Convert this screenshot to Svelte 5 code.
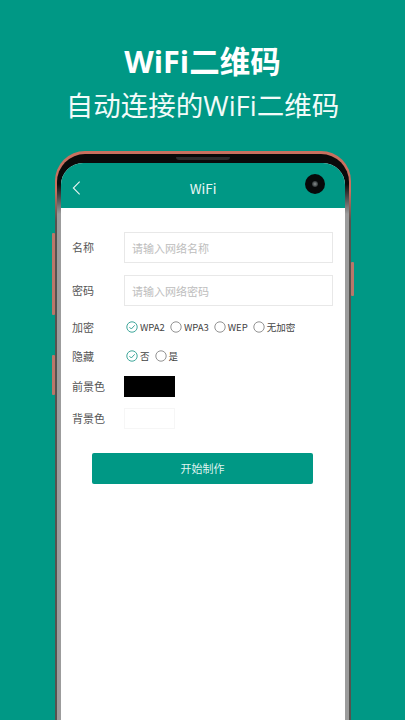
<script>
  const encryption = [
    { label: 'WPA2', on: true },
    { label: 'WPA3', on: false },
    { label: 'WEP', on: false },
    { label: '无加密', on: false }
  ];
  const hidden = [
    { label: '否', on: true },
    { label: '是', on: false }
  ];
</script>

{#snippet radio(item)}
  <span class="opt">
    <svg class="radio" viewBox="0 0 12 12" aria-hidden="true">
      {#if item.on}
        <circle cx="6" cy="6" r="5.2" fill="none" stroke="#2a9d90" stroke-width="0.9" />
        <path d="M3.4 6.1 5.3 8 8.7 4.3" fill="none" stroke="#2a9d90" stroke-width="0.9" />
      {:else}
        <circle cx="6" cy="6" r="5.2" fill="none" stroke="#777" stroke-width="0.8" />
      {/if}
    </svg>
    <span>{item.label}</span>
  </span>
{/snippet}

<div class="page">
  <header class="hero">
    <h1>WiFi二维码</h1>
    <p>自动连接的WiFi二维码</p>
  </header>

  <div class="phone">
    <span class="key left-a"></span>
    <span class="key left-b"></span>
    <span class="key right-a"></span>
    <div class="bezel">
      <span class="earpiece"></span>
      <div class="screen">
        <div class="bar">
          <svg class="back" viewBox="0 0 10 16" aria-hidden="true">
            <path d="M8.5 1 1.5 8l7 7" fill="none" stroke="#eaf6f4" stroke-width="1.2" />
          </svg>
          <span>WiFi</span>
          <span class="camera"><i></i></span>
        </div>
        <form class="form">
          <div class="row field first">
            <span class="label">名称</span>
            <div class="input">请输入网络名称</div>
          </div>
          <div class="row field">
            <span class="label">密码</span>
            <div class="input">请输入网络密码</div>
          </div>
          <div class="row choice enc">
            <span class="label">加密</span>
            <div class="opts">
              {#each encryption as item}{@render radio(item)}{/each}
            </div>
          </div>
          <div class="row choice hide">
            <span class="label">隐藏</span>
            <div class="opts">
              {#each hidden as item}{@render radio(item)}{/each}
            </div>
          </div>
          <div class="row color fg">
            <span class="label">前景色</span>
            <span class="swatch black"></span>
          </div>
          <div class="row color bg">
            <span class="label">背景色</span>
            <span class="swatch white"></span>
          </div>
          <div class="submit">开始制作</div>
        </form>
      </div>
    </div>
  </div>
</div>

<style>
  :global(body) {
    margin: 0;
    background: #009885;
  }
  .page {
    width: 405px;
    height: 720px;
    overflow: hidden;
    background: #009885;
    font-family: "Noto Sans CJK SC", "Noto Sans", sans-serif;
  }
  .hero {
    height: 151px;
    padding-top: 42px;
    box-sizing: border-box;
    text-align: center;
    color: #fff;
  }
  h1 {
    margin: 0;
    font-size: 30.5px;
    line-height: 38px;
    font-weight: 700;
    font-family: "Open Sans", "Noto Sans CJK SC", sans-serif;
  }
  .hero p {
    margin: 8px 0 0;
    font-size: 27.5px;
    line-height: 36px;
    font-weight: 400;
    color: #f2fbf9;
    font-family: "Open Sans", "Noto Sans CJK SC", sans-serif;
  }
  .phone {
    position: relative;
    width: 296px;
    height: 600px;
    margin-left: 55px;
    box-sizing: border-box;
    padding: 3px 2px 0;
    border-radius: 30px 30px 0 0;
    background: linear-gradient(#c9705f 0 40px, #55534f 70px);
  }
  .key {
    position: absolute;
    width: 3px;
    background: #b9776a;
    border-radius: 1px;
  }
  .left-a { left: -3px; top: 82px; height: 82px; }
  .left-b { left: -3px; top: 204px; height: 40px; }
  .right-a { right: -3px; top: 111px; height: 34px; }
  .bezel {
    position: relative;
    height: 100%;
    box-sizing: border-box;
    padding: 9px 4px 0;
    border-radius: 28px 28px 0 0;
    background: linear-gradient(#0a0a0a 0 30px, #9c9c9c 60px);
  }
  .earpiece {
    position: absolute;
    left: 119px;
    top: 3px;
    width: 54px;
    height: 3px;
    border-radius: 0 0 3px 3px;
    background: #2b2b2b;
  }
  .screen {
    height: 100%;
    border-radius: 22px 22px 0 0;
    overflow: hidden;
    background: #fff;
  }
  .bar {
    position: relative;
    height: 45px;
    display: flex;
    align-items: center;
    justify-content: center;
    padding-top: 4px;
    box-sizing: border-box;
    background: #009885;
    color: #eaf6f4;
    font-size: 13.5px;
  }
  .back {
    position: absolute;
    left: 11px;
    top: 17px;
    width: 9px;
    height: 16px;
  }
  .camera {
    position: absolute;
    right: 20px;
    top: 11px;
    width: 20px;
    height: 20px;
    border-radius: 50%;
    background: #07090a;
    display: flex;
    align-items: center;
    justify-content: center;
  }
  .camera i {
    width: 6px;
    height: 6px;
    border-radius: 50%;
    background: radial-gradient(#8a8f90, #23282a 80%);
  }
  .form {
    display: flex;
    flex-direction: column;
    padding-left: 11px;
    color: #555;
    font-size: 11px;
  }
  .row {
    display: flex;
    align-items: center;
  }
  .label {
    width: 52px;
    flex: none;
    padding-bottom: 1px;
    font-size: 11px;
    color: #555;
  }
  .field.first { margin-top: 24px; }
  .field + .field { margin-top: 12px; }
  .input {
    width: 209px;
    height: 31px;
    box-sizing: border-box;
    border: 1px solid #e8e8e8;
    padding: 0 0 0 7px;
    display: flex;
    align-items: center;
    font-size: 11px;
    color: #bdbdbd;
  }
  .choice {
    height: 16px;
  }
  .enc { margin-top: 13px; }
  .hide { margin-top: 13px; }
  .opts {
    display: flex;
    gap: 5px;
    padding-left: 2px;
    font-size: 9.5px;
    color: #444;
  }
  .opt {
    display: flex;
    align-items: center;
    gap: 2px;
  }
  .radio {
    width: 12px;
    height: 12px;
    flex: none;
  }
  .color { height: 21px; }
  .fg { margin-top: 12px; }
  .bg { margin-top: 11px; }
  .swatch {
    width: 51px;
    height: 21px;
    box-sizing: border-box;
  }
  .black { background: #000; }
  .white { border: 1px solid #f6f6f6; background: #fff; }
  .submit {
    width: 221px;
    height: 31px;
    margin: 24px 0 0 20px;
    padding-bottom: 2px;
    box-sizing: border-box;
    border-radius: 2px;
    background: #009885;
    color: #dff3ef;
    font-size: 11px;
    display: flex;
    align-items: center;
    justify-content: center;
  }
</style>
